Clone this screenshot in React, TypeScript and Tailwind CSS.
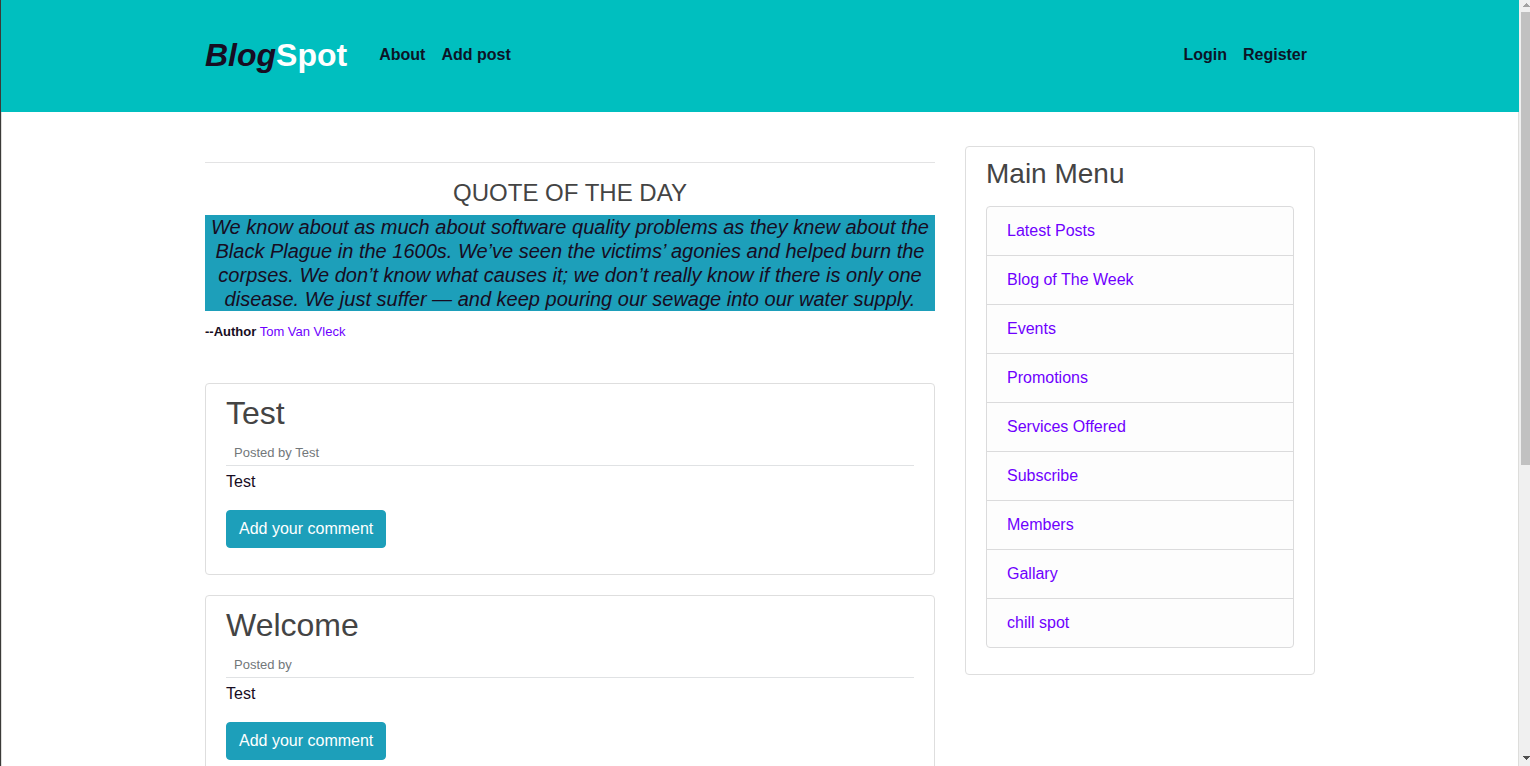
import React from "react";

const menuItems = [
  "Latest Posts",
  "Blog of The Week",
  "Events",
  "Promotions",
  "Services Offered",
  "Subscribe",
  "Members",
  "Gallary",
  "chill spot",
];

const posts = [
  { title: "Test", author: "Test", body: "Test" },
  { title: "Welcome", author: "", body: "Test" },
];

function NavLink({ label }: { label: string }) {
  return (
    <a href="#" className="p-2 font-bold text-[#0c1427]">
      {label}
    </a>
  );
}

function Header() {
  return (
    <header className="bg-[#00bfbf]">
      <nav className="mx-auto flex h-28 max-w-[1140px] items-center px-[15px] pb-[2px]">
        <a href="#" className="mr-6 text-[32px] leading-12 font-bold text-white">
          <em className="text-[#170c22]">Blog</em>Spot
        </a>
        <NavLink label="About" />
        <NavLink label="Add post" />
        <div className="ml-auto flex">
          <NavLink label="Login" />
          <NavLink label="Register" />
        </div>
      </nav>
    </header>
  );
}

function Quote() {
  return (
    <section className="border-t border-[#e3e3e4] pt-4">
      <h4 className="mb-2 text-center text-2xl leading-7 text-[#444444]">QUOTE OF THE DAY</h4>
      <blockquote className="bg-[#1d9fba] text-center text-xl leading-6 text-[#170c22] italic">
        We know about as much about software quality problems as they knew about the Black Plague in
        the 1600s. We’ve seen the victims’ agonies and helped burn the corpses. We don’t know what
        causes it; we don’t really know if there is only one disease. We just suffer — and keep
        pouring our sewage into our water supply.
      </blockquote>
      <p className="mt-2 pt-px text-[13px] leading-6">
        <strong>--Author</strong>{" "}
        <a href="#" className="text-[#6f00ff]">
          Tom Van Vleck
        </a>
      </p>
    </section>
  );
}

function Post({ title, author, body }: { title: string; author: string; body: string }) {
  return (
    <article className="mb-5 rounded-[4px] border border-[#dedede] bg-white px-5 pt-[10px] pb-[26px]">
      <h2 className="mb-2 text-[32px] leading-[38px] text-[#444444]">{title}</h2>
      <p className="border-b border-[#e0e2e4] px-2 pt-px text-[13px] leading-6 text-[#72777a]">
        Posted by {author}
      </p>
      <p className="mt-1 mb-4 leading-6">{body}</p>
      <button
        type="button"
        className="block rounded-[4px] border border-[#1d9fba] bg-[#1d9fba] px-3 py-[6px] leading-6 text-white"
      >
        Add your comment
      </button>
    </article>
  );
}

function Menu() {
  return (
    <aside className="rounded-[4px] border border-[#dedede] bg-white px-5 pt-[10px] pb-[26px]">
      <h3 className="mb-4 text-[28px] leading-[33px] text-[#444444]">Main Menu</h3>
      <ul className="divide-y divide-[#dbdbdc] rounded-[4px] border border-[#dbdbdc] bg-[#fdfdfd]">
        {menuItems.map((item) => (
          <li key={item} className="px-5 py-3 leading-6">
            <a href="#" className="text-[#6f00ff]">
              {item}
            </a>
          </li>
        ))}
      </ul>
    </aside>
  );
}

function ScrollBar() {
  return (
    <div aria-hidden="true" className="flex w-[11px] shrink-0 flex-col overflow-hidden bg-[#f0f0f0] pl-[2px]">
      <svg className="h-3 w-[9px] shrink-0" viewBox="0 0 9 12" shapeRendering="crispEdges">
        <path d="M5 3h1v1h1v1h1v1h1v1H2V6h1V5h1V4h1z" fill="#a3a3a3" />
      </svg>
      <div className="h-[59.1%] shrink-0 bg-[#c1c1c1]" />
      <svg className="mt-auto h-3 w-[9px] shrink-0" viewBox="0 0 9 12" shapeRendering="crispEdges">
        <path d="M2 2h7v1H8v1H7v1H6v1H5V5H4V4H3V3H2z" fill="#505050" />
      </svg>
    </div>
  );
}

export default function App() {
  return (
    <div className="flex h-screen overflow-hidden border-l border-[#3b3a38] bg-white font-['Liberation_Sans',Arial,sans-serif] text-base text-[#170c22]">
      <div className="flex min-w-0 flex-1 flex-col overflow-y-auto [scrollbar-width:none]">
        <Header />
        <main className="flex-1 border-x border-[#dddddb]">
          <div className="mx-auto flex max-w-[1140px] items-start pt-[34px]">
            <div className="w-2/3 px-[15px] pt-4">
              <Quote />
              <div className="mt-[39px]">
                {posts.map((post) => (
                  <Post key={post.title} {...post} />
                ))}
              </div>
            </div>
            <div className="w-1/3 px-[15px]">
              <Menu />
            </div>
          </div>
        </main>
      </div>
      <ScrollBar />
    </div>
  );
}
